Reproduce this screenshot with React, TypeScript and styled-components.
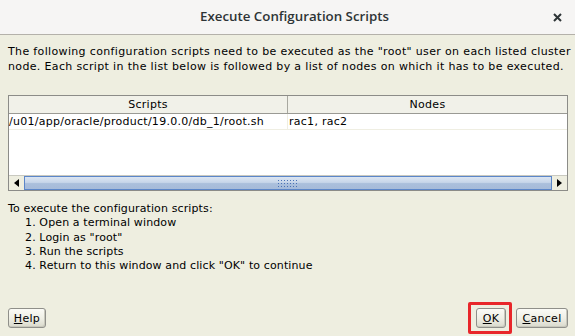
import styled, { createGlobalStyle } from 'styled-components';

const GlobalStyle = createGlobalStyle`
  html, body {
    margin: 0;
    padding: 0;
    background: #eeeee0;
  }
  * {
    box-sizing: border-box;
  }
`;

const Window = styled.div`
  width: 575px;
  height: 336px;
  display: flex;
  flex-direction: column;
  background: #eeeee0;
  font-family: 'DejaVu Sans', 'Liberation Sans', sans-serif;
  font-size: 11px;
  color: #000;
  overflow: hidden;
`;

const TitleBar = styled.div`
  height: 35px;
  flex: none;
  display: grid;
  grid-template-columns: 1fr auto 1fr;
  align-items: center;
  background: #f6f5f4;
  border-bottom: 1px solid #b4b1aa;
`;

const Title = styled.div`
  grid-column: 2;
  font-family: 'Open Sans', 'DejaVu Sans', sans-serif;
  font-weight: 600;
  font-size: 13.3px;
  color: #2e3436;
  padding-left: 14px;
  padding-bottom: 2px;
`;

const CloseButton = styled.div`
  grid-column: 3;
  justify-self: end;
  width: 34px;
  height: 34px;
  display: flex;
  align-items: center;
  justify-content: center;
  margin-right: 1px;
`;

const Body = styled.div`
  flex: 1;
  display: flex;
  flex-direction: column;
  padding: 9px 7px 0 8px;
  position: relative;
`;

const Intro = styled.p`
  margin: 0;
  line-height: 15px;
  letter-spacing: 0.35px;
  white-space: nowrap;
`;

const Table = styled.div`
  margin-top: 21px;
  width: 560px;
  height: 96px;
  border: 1px solid #8c8c88;
  background: #fff;
  display: flex;
  flex-direction: column;
`;

const Columns = styled.div`
  display: grid;
  grid-template-columns: 279px 1fr;
`;

const HeaderRow = styled(Columns)`
  height: 18px;
  background: #f1f1e9;
  border-bottom: 1px solid #9a9a94;
`;

const HeaderCell = styled.div<{ $last?: boolean }>`
  display: flex;
  align-items: center;
  justify-content: center;
  letter-spacing: 0.3px;
  border-right: ${(p) => (p.$last ? 'none' : '1px solid #a8a8a0')};
`;

const DataRow = styled(Columns)`
  height: 16px;
  border-bottom: 1px solid #efeee2;
`;

const Cell = styled.div<{ $last?: boolean }>`
  display: flex;
  align-items: center;
  padding-left: ${(p) => (p.$last ? '1px' : '0')};
  border-right: ${(p) => (p.$last ? 'none' : '1px solid #efeee2')};
  letter-spacing: 0.27px;
  white-space: nowrap;
`;

const Filler = styled.div`
  flex: 1;
`;

const ScrollBar = styled.div`
  height: 15px;
  display: flex;
  border-top: 1px solid #c9c9c0;
`;

const ArrowButton = styled.div`
  width: 15px;
  flex: none;
  background: #eeeee0;
  display: flex;
  align-items: center;
  justify-content: center;
`;

const Thumb = styled.div`
  flex: 1;
  border: 1px solid #5b86c9;
  background: linear-gradient(#dbe5f2 0%, #c7d6ea 45%, #aabfdc 55%, #a6bbd9 100%);
  display: flex;
  align-items: center;
  justify-content: center;
`;

const Grip = styled.div`
  width: 22px;
  height: 8px;
  background-image: radial-gradient(circle, #4a72b5 0.8px, transparent 1px);
  background-size: 3px 3px;
`;

const Steps = styled.div`
  margin-top: 11px;
  line-height: 14.3px;
  letter-spacing: 0.12px;
`;

const StepList = styled.ol`
  margin: 0;
  padding: 0 0 0 17px;
  list-style: none;
`;

const Footer = styled.div`
  margin-top: auto;
  height: 28px;
  padding-bottom: 8px;
  display: flex;
  align-items: flex-start;
  gap: 10px;
`;

const Button = styled.button<{ $w: number }>`
  width: ${(p) => p.$w}px;
  height: 20px;
  padding: 0;
  font-family: 'DejaVu Sans', 'Liberation Sans', sans-serif;
  font-size: 11px;
  letter-spacing: 0.3px;
  color: #000;
  border: 1px solid #8f8f8a;
  border-radius: 3px;
  background: linear-gradient(#fbfbf6 0%, #eeeee4 55%, #d9d9cc 100%);
  box-shadow: inset -1px -1px 0 #c8c8bc;
`;

const Spacer = styled.div`
  flex: 1;
`;

const Mnemonic = styled.span`
  text-decoration: underline;
`;

const Highlight = styled.div`
  position: absolute;
  left: 468px;
  top: 267px;
  width: 44px;
  height: 32px;
  border: 3px solid #e8262a;
  border-radius: 2px;
  pointer-events: none;
`;

const steps = [
  'Open a terminal window',
  'Login as "root"',
  'Run the scripts',
  'Return to this window and click "OK" to continue',
];

const Triangle = ({ dir }: { dir: 'left' | 'right' }) => (
  <svg width="5" height="8" viewBox="0 0 5 8">
    {dir === 'left' ? <path d="M5 0 L0 4 L5 8 Z" fill="#000" /> : <path d="M0 0 L5 4 L0 8 Z" fill="#000" />}
  </svg>
);

export default function App() {
  return (
    <Window>
      <GlobalStyle />
      <TitleBar>
        <Title>Execute Configuration Scripts</Title>
        <CloseButton>
          <svg width="9" height="9" viewBox="0 0 9 9">
            <path d="M1 1 L8 8 M8 1 L1 8" stroke="#2e3436" strokeWidth="2" />
          </svg>
        </CloseButton>
      </TitleBar>
      <Body>
        <Intro>
          The following configuration scripts need to be executed as the "root" user on each listed cluster
          <br />
          node. Each script in the list below is followed by a list of nodes on which it has to be executed.
        </Intro>
        <Table>
          <HeaderRow>
            <HeaderCell>Scripts</HeaderCell>
            <HeaderCell $last>Nodes</HeaderCell>
          </HeaderRow>
          <DataRow>
            <Cell>/u01/app/oracle/product/19.0.0/db_1/root.sh</Cell>
            <Cell $last>rac1, rac2</Cell>
          </DataRow>
          <Filler />
          <ScrollBar>
            <ArrowButton>
              <Triangle dir="left" />
            </ArrowButton>
            <Thumb>
              <Grip />
            </Thumb>
            <ArrowButton>
              <Triangle dir="right" />
            </ArrowButton>
          </ScrollBar>
        </Table>
        <Steps>
          To execute the configuration scripts:
          <StepList>
            {steps.map((s, i) => (
              <li key={s}>
                {i + 1}. {s}
              </li>
            ))}
          </StepList>
        </Steps>
        <Footer>
          <Button $w={38}>
            <Mnemonic>H</Mnemonic>elp
          </Button>
          <Spacer />
          <Button $w={30}>
            <Mnemonic>O</Mnemonic>K
          </Button>
          <Button $w={52}>
            <Mnemonic>C</Mnemonic>ancel
          </Button>
        </Footer>
        <Highlight />
      </Body>
    </Window>
  );
}
